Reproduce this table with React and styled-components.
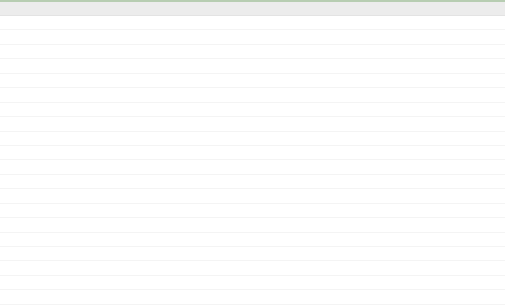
import React from 'react'
import styled, { createGlobalStyle } from 'styled-components'

const Global = createGlobalStyle`
  html, body { margin: 0; padding: 0; background: #fff; }
  body { font-family: "Liberation Sans", Arial, sans-serif; }
`

const Page = styled.div`
  width: 505px;
  height: 306px;
  overflow: hidden;
  background: #fff;
  border-top: 2px solid #b7cdb2;
`

const Header = styled.div`
  height: 13px;
  background: #ececec;
  border-bottom: 1px solid #e3e3e3;
`

const Rows = styled.div`
  display: flex;
  flex-direction: column;
`

const Row = styled.div`
  height: 13.45px;
  border-bottom: 1px solid #f4f4f4;
`

export default function App() {
  const rows = Array.from({ length: 20 })
  return (
    <>
      <Global />
      <Page>
        <Header />
        <Rows>
          {rows.map((_, i) => <Row key={i} />)}
        </Rows>
      </Page>
    </>
  )
}
